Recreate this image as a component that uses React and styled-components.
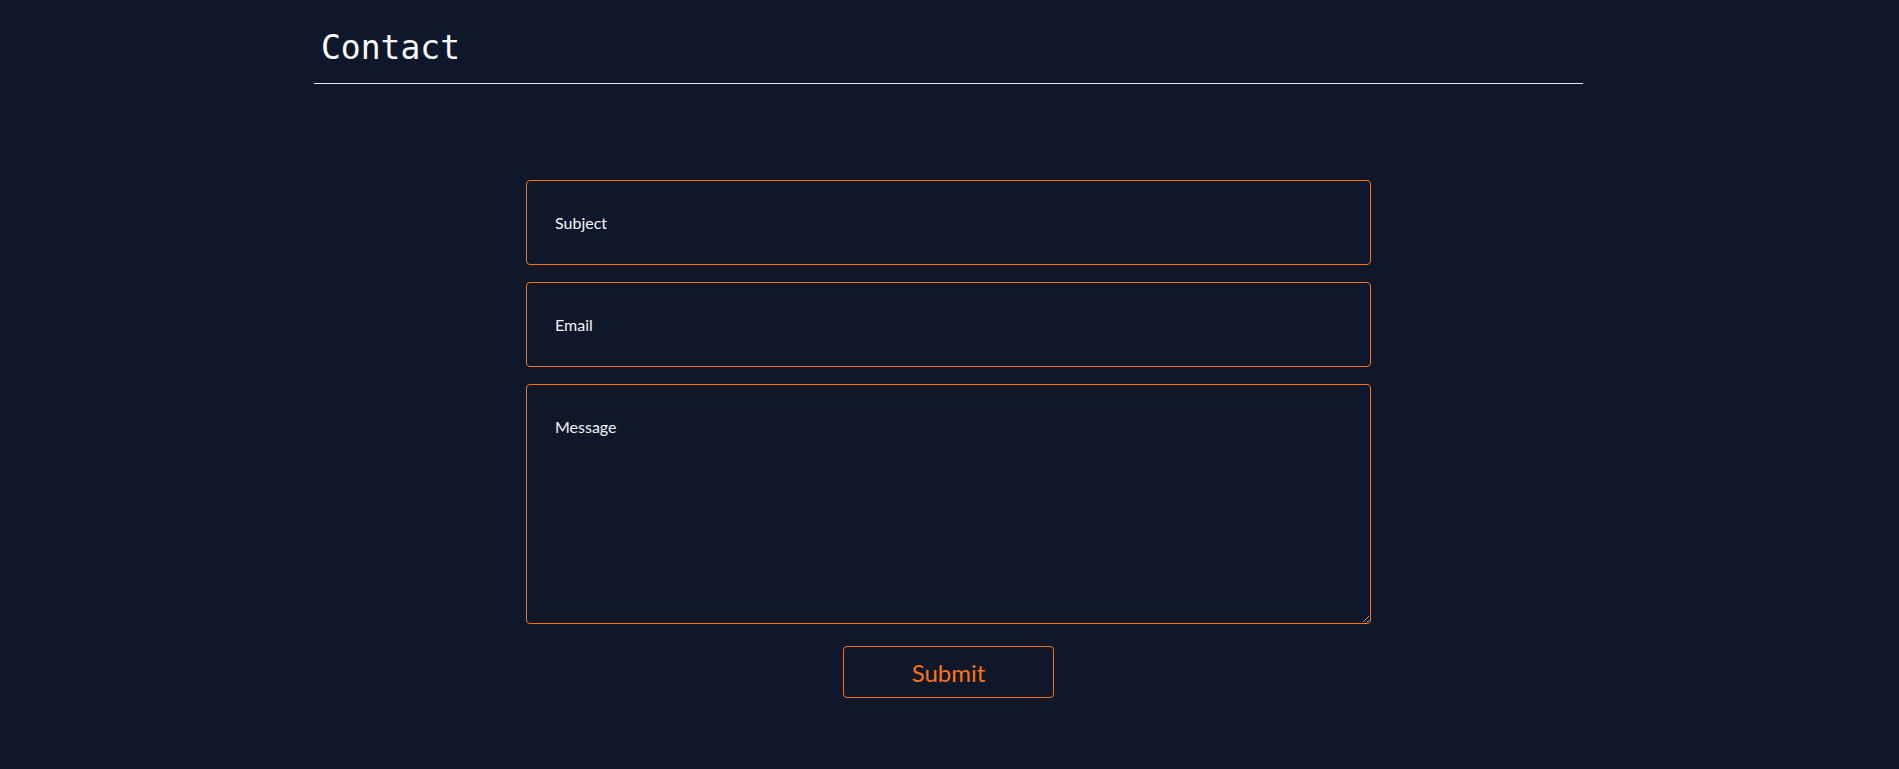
import React from "react";
import styled, { createGlobalStyle } from "styled-components";

const GlobalStyle = createGlobalStyle`
  html, body {
    margin: 0;
    padding: 0;
    background: #0f172a;
  }
  body {
    font-family: Lato, "Open Sans", sans-serif;
    color: #f8fafc;
  }
`;

const Page = styled.main`
  min-height: 769px;
  background: #0f172a;
  padding: 29px 2px 0 0;
  box-sizing: border-box;
`;

const Header = styled.header`
  width: 1269px;
  margin: 0 auto;
  padding: 0 0 17px 7px;
  box-sizing: border-box;
  border-bottom: 1px solid #e2e8f0;
`;

const Title = styled.h1`
  margin: 0;
  font-family: "DejaVu Sans Mono", "Liberation Mono", monospace;
  font-weight: 400;
  font-size: 33px;
  line-height: 37px;
  color: #f8fafc;
`;

const Form = styled.form`
  width: 845px;
  margin: 96px auto 0;
  display: flex;
  flex-direction: column;
  align-items: center;
  gap: 17px;
`;

const fieldBase = `
  width: 100%;
  box-sizing: border-box;
  background: transparent;
  border: 1px solid #f97316;
  border-radius: 4px;
  color: #f8fafc;
  font-family: Lato, "Open Sans", sans-serif;
  font-size: 16px;
  outline: none;
  &::placeholder {
    color: #f1f5f9;
    opacity: 1;
  }
`;

const Input = styled.input`
  ${fieldBase}
  height: 85px;
  padding: 0 28px;
`;

const TextArea = styled.textarea`
  ${fieldBase}
  height: 240px;
  padding: 32px 28px;
  line-height: 19px;
  display: block;
`;

const SubmitButton = styled.button`
  margin-top: 5px;
  width: 211px;
  height: 52px;
  box-sizing: border-box;
  background: transparent;
  border: 1px solid #f97316;
  border-radius: 4px;
  color: #f97316;
  font-family: Lato, "Open Sans", sans-serif;
  font-size: 24px;
  cursor: pointer;
`;

export default function App() {
  return (
    <>
      <GlobalStyle />
      <Page>
        <Header>
          <Title>Contact</Title>
        </Header>
        <Form onSubmit={(e) => e.preventDefault()}>
          <Input type="text" placeholder="Subject" />
          <Input type="email" placeholder="Email" />
          <TextArea placeholder="Message" />
          <SubmitButton type="submit">Submit</SubmitButton>
        </Form>
      </Page>
    </>
  );
}
